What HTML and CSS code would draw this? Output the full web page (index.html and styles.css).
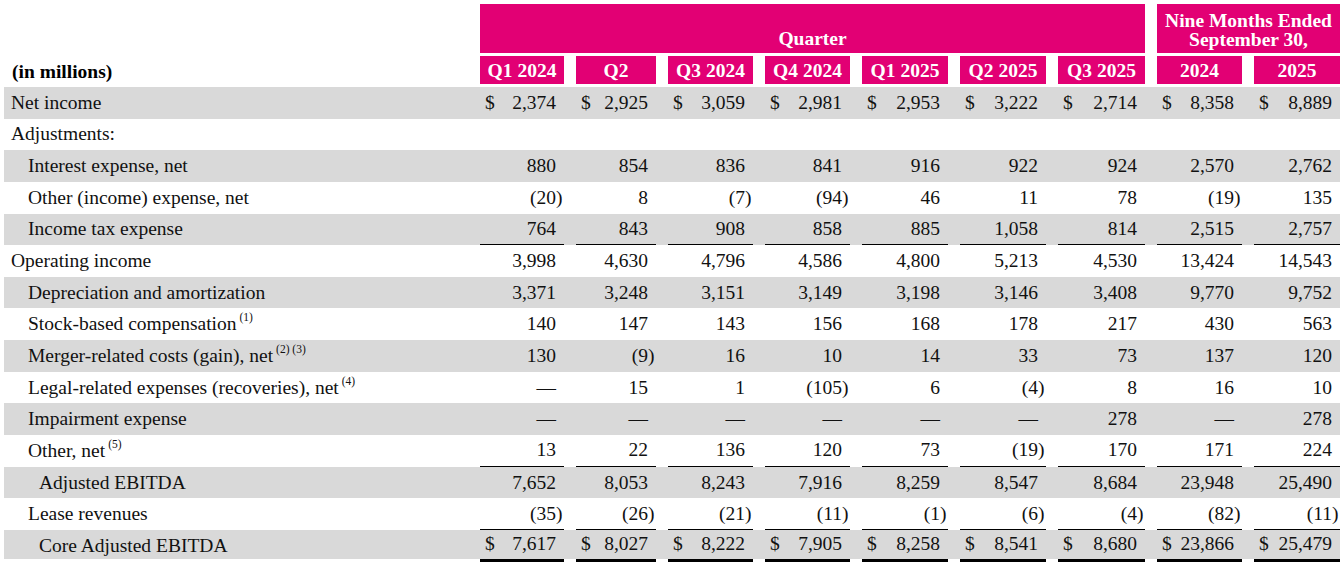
FILE: index.html
```html
<!DOCTYPE html>
<html lang="en">
<head>
<meta charset="utf-8">
<title>Adjusted EBITDA reconciliation</title>
<link rel="stylesheet" href="styles.css">
</head>
<body>
<div class="page">
  <div class="grid head-top">
    <div class="spacer"></div>
    <div class="band band-q">Quarter</div>
    <div class="band band-n">Nine Months Ended<br>September 30,</div>
  </div>
  <div class="grid head-sub">
    <div class="units">(in millions)</div>
    <div class="hcell">Q1 2024</div>
    <div class="hcell">Q2</div>
    <div class="hcell">Q3 2024</div>
    <div class="hcell">Q4 2024</div>
    <div class="hcell">Q1 2025</div>
    <div class="hcell">Q2 2025</div>
    <div class="hcell">Q3 2025</div>
    <div class="hcell">2024</div>
    <div class="hcell">2025</div>
  </div>

  <div class="grid row grey">
    <div class="label l0">Net income</div>
    <div class="val"><span class="cur">$</span><span class="num">2,374</span></div>
    <div class="val"><span class="cur">$</span><span class="num">2,925</span></div>
    <div class="val"><span class="cur">$</span><span class="num">3,059</span></div>
    <div class="val"><span class="cur">$</span><span class="num">2,981</span></div>
    <div class="val"><span class="cur">$</span><span class="num">2,953</span></div>
    <div class="val"><span class="cur">$</span><span class="num">3,222</span></div>
    <div class="val"><span class="cur">$</span><span class="num">2,714</span></div>
    <div class="val"><span class="cur">$</span><span class="num">8,358</span></div>
    <div class="val"><span class="cur">$</span><span class="num">8,889</span></div>
  </div>

  <div class="grid row">
    <div class="label l0">Adjustments:</div>
  </div>

  <div class="grid row grey">
    <div class="label l1">Interest expense, net</div>
    <div class="val"><span class="num">880</span></div>
    <div class="val"><span class="num">854</span></div>
    <div class="val"><span class="num">836</span></div>
    <div class="val"><span class="num">841</span></div>
    <div class="val"><span class="num">916</span></div>
    <div class="val"><span class="num">922</span></div>
    <div class="val"><span class="num">924</span></div>
    <div class="val"><span class="num">2,570</span></div>
    <div class="val"><span class="num">2,762</span></div>
  </div>

  <div class="grid row">
    <div class="label l1">Other (income) expense, net</div>
    <div class="val neg"><span class="num">(20)</span></div>
    <div class="val"><span class="num">8</span></div>
    <div class="val neg"><span class="num">(7)</span></div>
    <div class="val neg"><span class="num">(94)</span></div>
    <div class="val"><span class="num">46</span></div>
    <div class="val"><span class="num">11</span></div>
    <div class="val"><span class="num">78</span></div>
    <div class="val neg"><span class="num">(19)</span></div>
    <div class="val"><span class="num">135</span></div>
  </div>

  <div class="grid row grey rule">
    <div class="label l1">Income tax expense</div>
    <div class="val"><span class="num">764</span></div>
    <div class="val"><span class="num">843</span></div>
    <div class="val"><span class="num">908</span></div>
    <div class="val"><span class="num">858</span></div>
    <div class="val"><span class="num">885</span></div>
    <div class="val"><span class="num">1,058</span></div>
    <div class="val"><span class="num">814</span></div>
    <div class="val"><span class="num">2,515</span></div>
    <div class="val"><span class="num">2,757</span></div>
  </div>

  <div class="grid row">
    <div class="label l0">Operating income</div>
    <div class="val"><span class="num">3,998</span></div>
    <div class="val"><span class="num">4,630</span></div>
    <div class="val"><span class="num">4,796</span></div>
    <div class="val"><span class="num">4,586</span></div>
    <div class="val"><span class="num">4,800</span></div>
    <div class="val"><span class="num">5,213</span></div>
    <div class="val"><span class="num">4,530</span></div>
    <div class="val"><span class="num">13,424</span></div>
    <div class="val"><span class="num">14,543</span></div>
  </div>

  <div class="grid row grey">
    <div class="label l1">Depreciation and amortization</div>
    <div class="val"><span class="num">3,371</span></div>
    <div class="val"><span class="num">3,248</span></div>
    <div class="val"><span class="num">3,151</span></div>
    <div class="val"><span class="num">3,149</span></div>
    <div class="val"><span class="num">3,198</span></div>
    <div class="val"><span class="num">3,146</span></div>
    <div class="val"><span class="num">3,408</span></div>
    <div class="val"><span class="num">9,770</span></div>
    <div class="val"><span class="num">9,752</span></div>
  </div>

  <div class="grid row">
    <div class="label l1">Stock-based compensation <sup class="fn">(1)</sup></div>
    <div class="val"><span class="num">140</span></div>
    <div class="val"><span class="num">147</span></div>
    <div class="val"><span class="num">143</span></div>
    <div class="val"><span class="num">156</span></div>
    <div class="val"><span class="num">168</span></div>
    <div class="val"><span class="num">178</span></div>
    <div class="val"><span class="num">217</span></div>
    <div class="val"><span class="num">430</span></div>
    <div class="val"><span class="num">563</span></div>
  </div>

  <div class="grid row grey">
    <div class="label l1">Merger-related costs (gain), net <sup class="fn">(2) (3)</sup></div>
    <div class="val"><span class="num">130</span></div>
    <div class="val neg"><span class="num">(9)</span></div>
    <div class="val"><span class="num">16</span></div>
    <div class="val"><span class="num">10</span></div>
    <div class="val"><span class="num">14</span></div>
    <div class="val"><span class="num">33</span></div>
    <div class="val"><span class="num">73</span></div>
    <div class="val"><span class="num">137</span></div>
    <div class="val"><span class="num">120</span></div>
  </div>

  <div class="grid row">
    <div class="label l1">Legal-related expenses (recoveries), net <sup class="fn">(4)</sup></div>
    <div class="val"><span class="num">—</span></div>
    <div class="val"><span class="num">15</span></div>
    <div class="val"><span class="num">1</span></div>
    <div class="val neg"><span class="num">(105)</span></div>
    <div class="val"><span class="num">6</span></div>
    <div class="val neg"><span class="num">(4)</span></div>
    <div class="val"><span class="num">8</span></div>
    <div class="val"><span class="num">16</span></div>
    <div class="val"><span class="num">10</span></div>
  </div>

  <div class="grid row grey">
    <div class="label l1">Impairment expense</div>
    <div class="val"><span class="num">—</span></div>
    <div class="val"><span class="num">—</span></div>
    <div class="val"><span class="num">—</span></div>
    <div class="val"><span class="num">—</span></div>
    <div class="val"><span class="num">—</span></div>
    <div class="val"><span class="num">—</span></div>
    <div class="val"><span class="num">278</span></div>
    <div class="val"><span class="num">—</span></div>
    <div class="val"><span class="num">278</span></div>
  </div>

  <div class="grid row rule">
    <div class="label l1">Other, net <sup class="fn">(5)</sup></div>
    <div class="val"><span class="num">13</span></div>
    <div class="val"><span class="num">22</span></div>
    <div class="val"><span class="num">136</span></div>
    <div class="val"><span class="num">120</span></div>
    <div class="val"><span class="num">73</span></div>
    <div class="val neg"><span class="num">(19)</span></div>
    <div class="val"><span class="num">170</span></div>
    <div class="val"><span class="num">171</span></div>
    <div class="val"><span class="num">224</span></div>
  </div>

  <div class="grid row grey">
    <div class="label l2">Adjusted EBITDA</div>
    <div class="val"><span class="num">7,652</span></div>
    <div class="val"><span class="num">8,053</span></div>
    <div class="val"><span class="num">8,243</span></div>
    <div class="val"><span class="num">7,916</span></div>
    <div class="val"><span class="num">8,259</span></div>
    <div class="val"><span class="num">8,547</span></div>
    <div class="val"><span class="num">8,684</span></div>
    <div class="val"><span class="num">23,948</span></div>
    <div class="val"><span class="num">25,490</span></div>
  </div>

  <div class="grid row rule">
    <div class="label l1">Lease revenues</div>
    <div class="val neg"><span class="num">(35)</span></div>
    <div class="val neg"><span class="num">(26)</span></div>
    <div class="val neg"><span class="num">(21)</span></div>
    <div class="val neg"><span class="num">(11)</span></div>
    <div class="val neg"><span class="num">(1)</span></div>
    <div class="val neg"><span class="num">(6)</span></div>
    <div class="val neg"><span class="num">(4)</span></div>
    <div class="val neg"><span class="num">(82)</span></div>
    <div class="val neg"><span class="num">(11)</span></div>
  </div>

  <div class="grid row grey total">
    <div class="label l2">Core Adjusted EBITDA</div>
    <div class="val"><span class="cur">$</span><span class="num">7,617</span></div>
    <div class="val"><span class="cur">$</span><span class="num">8,027</span></div>
    <div class="val"><span class="cur">$</span><span class="num">8,222</span></div>
    <div class="val"><span class="cur">$</span><span class="num">7,905</span></div>
    <div class="val"><span class="cur">$</span><span class="num">8,258</span></div>
    <div class="val"><span class="cur">$</span><span class="num">8,541</span></div>
    <div class="val"><span class="cur">$</span><span class="num">8,680</span></div>
    <div class="val"><span class="cur">$</span><span class="num">23,866</span></div>
    <div class="val"><span class="cur">$</span><span class="num">25,479</span></div>
  </div>
</div>
</body>
</html>
```

FILE: styles.css
```css
html, body {
  margin: 0;
  padding: 0;
  background: #ffffff;
}

body {
  font-family: "Liberation Serif", "Times New Roman", serif;
  font-size: 19.5px;
  color: #111111;
}

.page {
  padding: 4px 0 0 4px;
  width: 1336px;
}

.grid {
  display: grid;
  grid-template-columns: 464px 84px 80px 85px 85px 86px 86px 87px 85px 86px;
  column-gap: 12px;
}

/* header */
.head-top {
  height: 49px;
}

.band {
  background: #e20074;
  color: #ffffff;
  font-weight: bold;
  display: flex;
  align-items: flex-end;
  justify-content: center;
  text-align: center;
  line-height: 19px;
  padding-bottom: 5px;
  box-sizing: border-box;
}

.band-q {
  grid-column: 2 / 9;
}

.band-n {
  grid-column: 9 / 11;
  padding-bottom: 4px;
}

.head-sub {
  height: 28px;
  margin-top: 3px;
  margin-bottom: 3px;
}

.units {
  font-weight: bold;
  padding-left: 8px;
  align-self: end;
  line-height: 22px;
  padding-bottom: 1px;
  color: #000000;
}

.hcell {
  background: #e20074;
  color: #ffffff;
  font-weight: bold;
  display: flex;
  align-items: center;
  justify-content: center;
  line-height: 1;
  padding-top: 1px;
  box-sizing: border-box;
}

/* body rows */
.row {
  height: 31.65px;
  align-items: stretch;
}

.grey {
  background: #d9d9d9;
}

.label {
  display: flex;
  align-items: center;
  white-space: nowrap;
}

.l0 { padding-left: 7px; }
.l1 { padding-left: 24px; }
.l2 { padding-left: 35px; }

.fn {
  font-size: 11.5px;
  line-height: 0;
  vertical-align: 0;
  position: relative;
  top: -7px;
  margin-left: 3px;
}

.val {
  display: flex;
  align-items: center;
  justify-content: flex-end;
  padding: 0 8px 0 5px;
  box-sizing: border-box;
  white-space: nowrap;
}

.val .cur {
  margin-right: auto;
}

.val.neg .num {
  margin-right: -0.333em;
}

.rule .val {
  border-bottom: 1px solid #000000;
}

.total {
  background: linear-gradient(#d9d9d9, #d9d9d9) top / 100% calc(100% - 3px) no-repeat;
}

.total .val {
  border-bottom: 3px solid #000000;
}
```
